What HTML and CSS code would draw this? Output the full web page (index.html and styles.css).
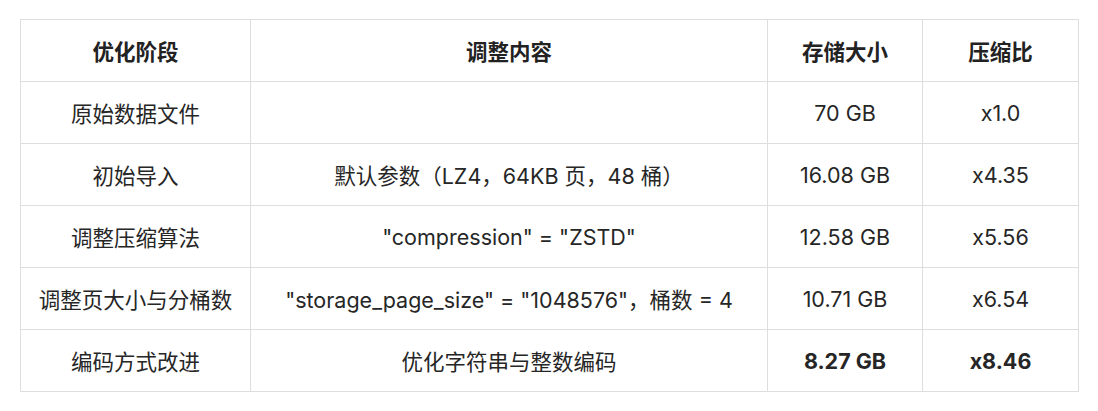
FILE: index.html
```html
<!DOCTYPE html>
<html lang="zh-CN">
<head>
<meta charset="utf-8">
<title>优化阶段</title>
<link rel="stylesheet" href="styles.css">
</head>
<body>
<table class="tbl">
  <colgroup>
    <col class="c1"><col class="c2"><col class="c3"><col class="c4">
  </colgroup>
  <thead>
    <tr><th>优化阶段</th><th>调整内容</th><th>存储大小</th><th>压缩比</th></tr>
  </thead>
  <tbody>
    <tr><td>原始数据文件</td><td></td><td>70 GB</td><td>x1.0</td></tr>
    <tr><td>初始导入</td><td>默认参数（LZ4，64KB 页，48 桶）</td><td>16.08 GB</td><td>x4.35</td></tr>
    <tr><td>调整压缩算法</td><td>"compression" = "ZSTD"</td><td>12.58 GB</td><td>x5.56</td></tr>
    <tr><td>调整页大小与分桶数</td><td>"storage_page_size" = "1048576"，桶数 = 4</td><td>10.71 GB</td><td>x6.54</td></tr>
    <tr><td>编码方式改进</td><td>优化字符串与整数编码</td><td class="strong">8.27 GB</td><td class="strong">x8.46</td></tr>
  </tbody>
</table>
</body>
</html>
```
FILE: styles.css
```css
html, body {
  margin: 0;
  background: #ffffff;
}
body {
  padding: 19px 20px;
  font-family: "Inter", "Noto Sans CJK SC", sans-serif;
  color: #262626;
}
.tbl {
  border-collapse: collapse;
  width: 1058px;
  table-layout: fixed;
  font-size: 21.5px;
}
.c1 { width: 230px; }
.c2 { width: 517px; }
.c3 { width: 155px; }
.c4 { width: 156px; }
.tbl th, .tbl td {
  border: 1px solid #dedede;
  height: 62px;
  padding: 0 8px;
  text-align: center;
  vertical-align: middle;
  white-space: nowrap;
  box-sizing: border-box;
}
.tbl th {
  font-weight: 700;
  color: #222222;
}
.tbl .strong {
  font-weight: 700;
}
```
